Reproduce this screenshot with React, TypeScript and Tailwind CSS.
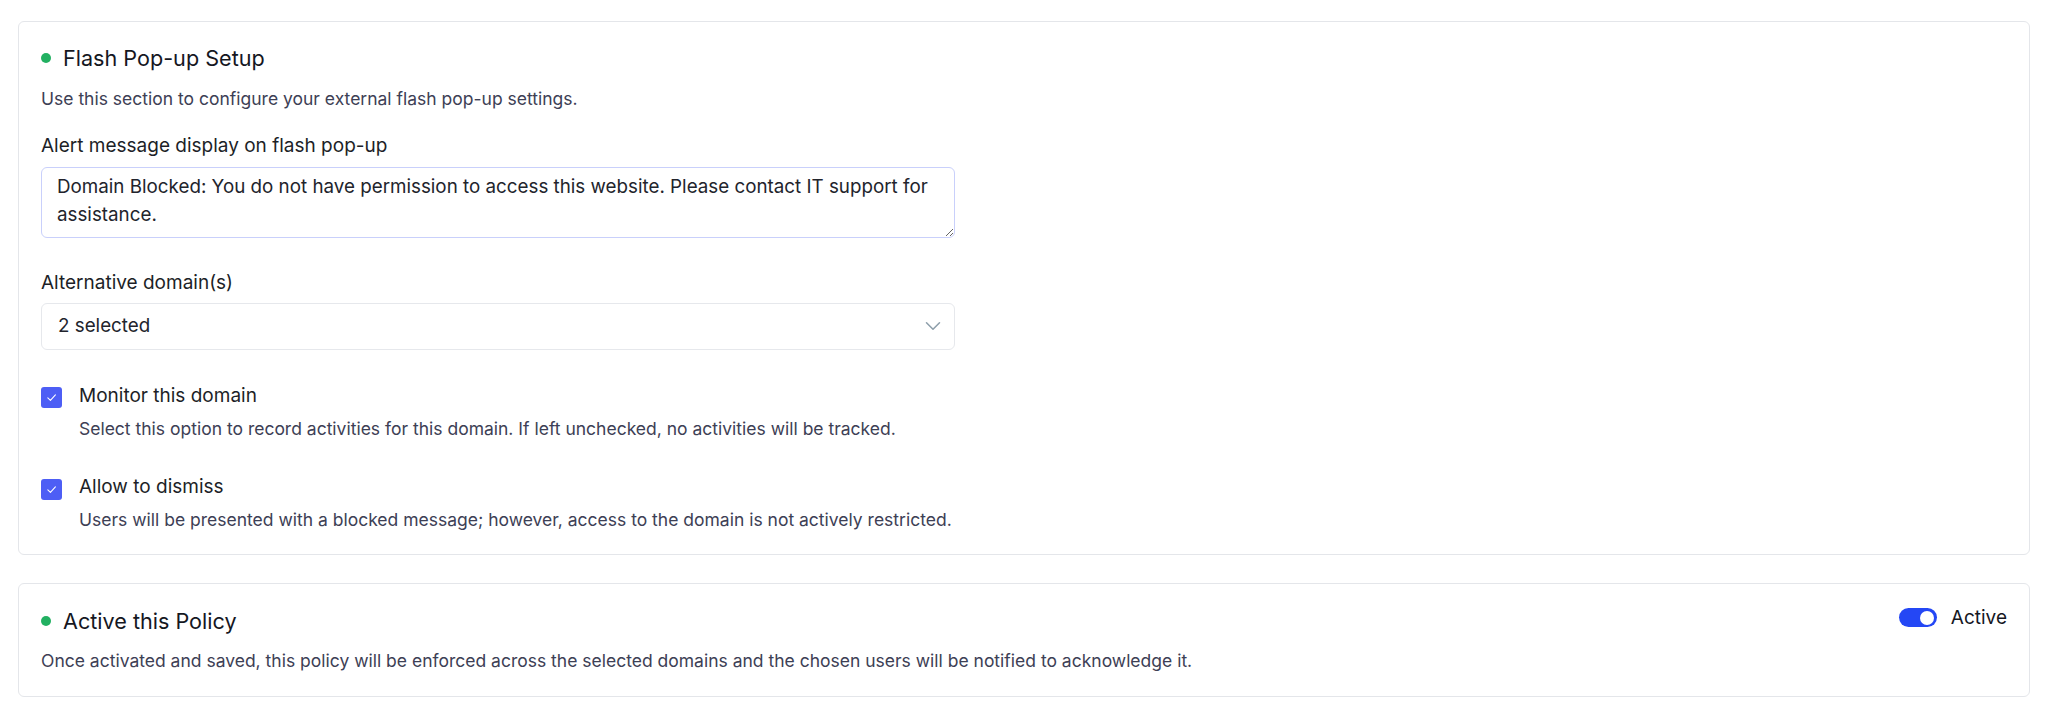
import { ChevronDown } from "lucide-react"

const font = { fontFamily: "Inter, 'Noto Sans', sans-serif" }

function Dot() {
  return <span className="inline-block w-[10px] h-[10px] rounded-full bg-[#22b061] shrink-0" />
}

function Checkbox() {
  return (
    <div className="w-[21px] h-[21px] rounded-[3px] bg-[#4d5ef5] flex items-center justify-center shrink-0 mt-[5.5px]">
      <svg width="13" height="13" viewBox="0 0 12 12" fill="none">
        <polyline points="2.6,6.4 5,8.7 9.6,3.6" stroke="#ffffff" strokeWidth="1" strokeLinecap="round" strokeLinejoin="round" />
      </svg>
    </div>
  )
}

const options = [
  {
    label: "Monitor this domain",
    desc: "Select this option to record activities for this domain. If left unchecked, no activities will be tracked.",
  },
  {
    label: "Allow to dismiss",
    desc: "Users will be presented with a blocked message; however, access to the domain is not actively restricted.",
  },
]

export default function App() {
  return (
    <div className="min-h-screen bg-white px-[18px] pt-[20.7px] pb-[14px]" style={font}>
      {/* flash pop-up card */}
      <section className="border border-[#e4e6ea] rounded-[6px] px-[22px] pt-[22px] pb-[22.4px]">
        <div className="flex items-center gap-3 h-[28px]">
          <Dot />
          <h2 className="text-[21.6px] leading-[28px] text-[#15171f]">Flash Pop-up Setup</h2>
        </div>
        <p className="mt-[15.2px] text-[17.5px] leading-[24px] text-[#3d4055]">
          Use this section to configure your external flash pop-up settings.
        </p>

        <label className="block mt-[21.5px] text-[19px] leading-[28px] text-[#1d1f27]">
          Alert message display on flash pop-up
        </label>
        <textarea
          className="mt-[6.3px] block w-[914px] h-[71px] border border-[#c9d0fb] rounded-[6px] px-[15px] pt-[5px] pb-[4px] text-[18.8px] leading-[28.8px] text-[#22242c] outline-none"
          defaultValue="Domain Blocked: You do not have permission to access this website. Please contact IT support for assistance."
        />

        <label className="block mt-[31px] text-[19px] leading-[28px] text-[#1d1f27]">Alternative domain(s)</label>
        <div className="mt-[6.3px] w-[914px] h-[47px] border border-[#e6e8ec] rounded-[6px] flex items-center justify-between pl-[16px] pr-[8px]">
          <span className="text-[18.8px] text-[#22242c]">2 selected</span>
          <ChevronDown className="w-[26px] h-[26px] text-[#8e9fab]" strokeWidth={1.4} />
        </div>

        <div className="mt-[31.8px] flex flex-col gap-[32.5px]">
          {options.map((o) => (
            <div key={o.label} className="flex items-start gap-[17px]">
              <Checkbox />
              <div>
                <div className="text-[19px] leading-[28px] text-[#1d1f27]">{o.label}</div>
                <div className="mt-[6.8px] text-[17.5px] leading-[24px] text-[#3d4055]">{o.desc}</div>
              </div>
            </div>
          ))}
        </div>
      </section>

      {/* policy card */}
      <section className="mt-[27.6px] border border-[#e4e6ea] rounded-[6px] px-[22px] pt-[23px] pb-[23px]">
        <div className="flex items-start justify-between">
          <div className="flex items-center gap-3 h-[28px]">
            <Dot />
            <h2 className="text-[21.6px] leading-[28px] text-[#15171f]">Active this Policy</h2>
          </div>
          <div className="flex items-center gap-[14px] -mt-[3px]">
            <button className="w-[38px] h-[19px] rounded-full bg-[#2447f5] flex items-center justify-end pr-[3px]">
              <span className="w-[14px] h-[14px] rounded-full bg-white" />
            </button>
            <span className="text-[19px] leading-[28px] text-[#15171f]">Active</span>
          </div>
        </div>
        <p className="mt-[14px] text-[17.5px] leading-[24px] text-[#3d4055]">
          Once activated and saved, this policy will be enforced across the selected domains and the chosen users will be notified to acknowledge it.
        </p>
      </section>
    </div>
  )
}
